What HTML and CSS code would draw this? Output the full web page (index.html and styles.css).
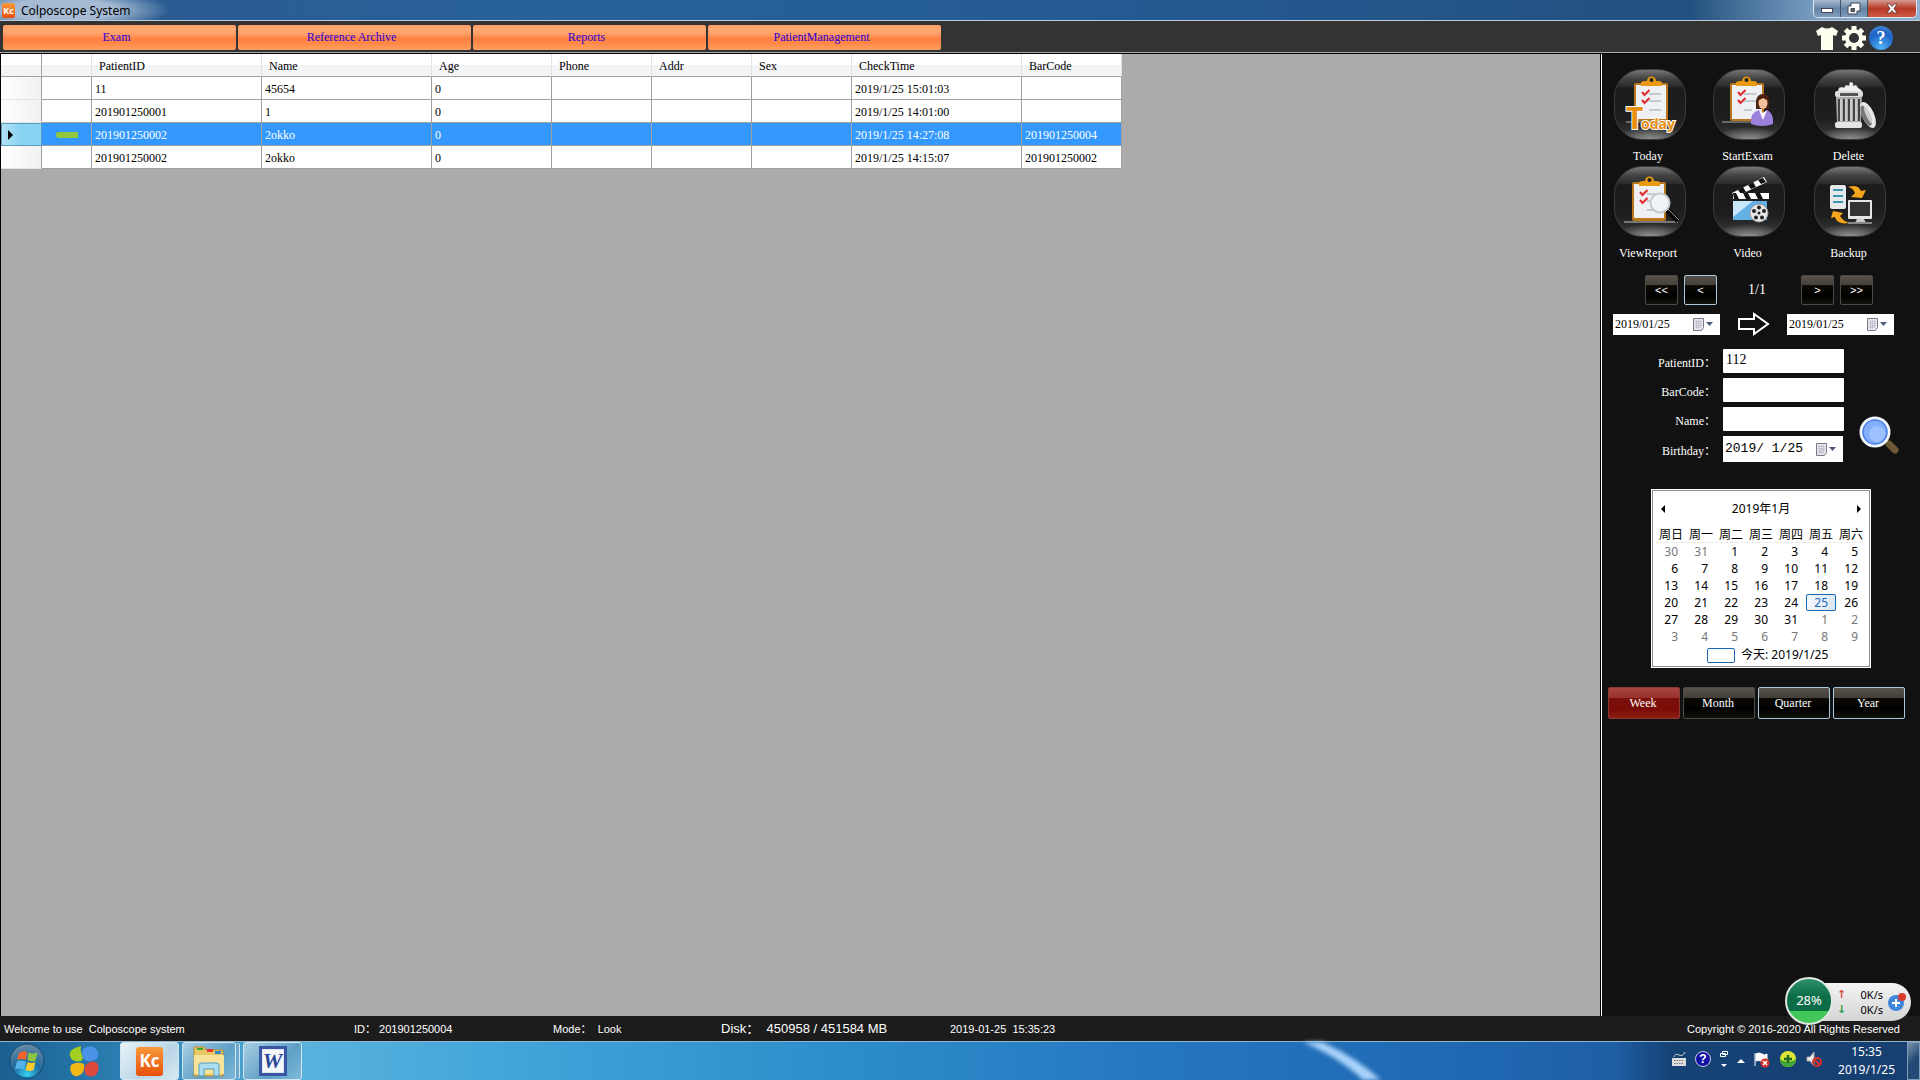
FILE: index.html
```html
<!DOCTYPE html>
<html lang="en">
<head>
<meta charset="utf-8">
<title>Colposcope System</title>
<link rel="stylesheet" href="styles.css">
</head>
<body>
<header class="titlebar">
  <span class="app-badge">Kc</span>
  <h1 class="app-title">Colposcope System</h1>
  <div class="window-controls">
    <button class="win-btn win-min" aria-label="Minimize"><svg width="14" height="14" viewBox="0 0 14 14"><rect x="1.500" y="6.500" width="11" height="4" fill="#fff" stroke="#445" /></svg></button>
    <button class="win-btn win-restore" aria-label="Restore"><svg width="14" height="14" viewBox="0 0 14 14"><path d="M4 1h9v8h-3v3H1V4h3z" fill="#fff" stroke="#445"/><path d="M4 6.500h3.500v3H4z" fill="#567" stroke="#445"/></svg></button>
    <button class="win-btn win-close" aria-label="Close"><svg width="14" height="14" viewBox="0 0 14 14"><path d="M2 2h3l2 2.500L9 2h3L9 6.500l3 4.500H9L7 8.500 5 11H2l3-4.500z" fill="#fff" stroke="#533" stroke-width=".8"/></svg></button>
  </div>
</header>

<div class="toolbar">
  <nav class="tabs">
    <button class="tab">Exam</button>
    <button class="tab">Reference Archive</button>
    <button class="tab">Reports</button>
    <button class="tab">PatientManagement</button>
  </nav>
  <div class="tools">
    <button class="tool" aria-label="Skin"><svg width="24" height="24" viewBox="0 0 24 24"><path d="M7 1Q12 4 17 1L23 5 21 10 18 9V24H6V9L3 10 1 5Z" fill="#fffff0"/></svg></button>
    <button class="tool" aria-label="Settings"><svg width="24" height="24" viewBox="0 0 24 24"><g fill="#fffff0"><rect x="9.500" width="5" height="24"/><rect x="9.500" width="5" height="24" transform="rotate(45 12 12)"/><rect x="9.500" width="5" height="24" transform="rotate(90 12 12)"/><rect x="9.500" width="5" height="24" transform="rotate(135 12 12)"/><circle cx="12" cy="12" r="9"/></g><circle cx="12" cy="12" r="5" fill="#333"/></svg></button>
    <button class="tool help-tool" aria-label="Help">?</button>
  </div>
</div>

<main class="workspace">
  <section class="records">
    <table class="grid">
      <colgroup><col class="c-head"><col class="c-mark"><col class="c-wide"><col class="c-wide"><col class="c-age"><col class="c-std"><col class="c-std"><col class="c-std"><col class="c-wide"><col class="c-std"></colgroup>
      <thead><tr><th></th><th></th><th>PatientID</th><th>Name</th><th>Age</th><th>Phone</th><th>Addr</th><th>Sex</th><th>CheckTime</th><th>BarCode</th></tr></thead>
      <tbody>
        <tr><th></th><td></td><td>11</td><td>45654</td><td>0</td><td></td><td></td><td></td><td>2019/1/25 15:01:03</td><td></td></tr>
        <tr><th></th><td></td><td>201901250001</td><td>1</td><td>0</td><td></td><td></td><td></td><td>2019/1/25 14:01:00</td><td></td></tr>
        <tr class="selected"><th><span class="row-arrow"></span></th><td><span class="mark"></span></td><td>201901250002</td><td>2okko</td><td>0</td><td></td><td></td><td></td><td>2019/1/25 14:27:08</td><td>201901250004</td></tr>
        <tr><th></th><td></td><td>201901250002</td><td>2okko</td><td>0</td><td></td><td></td><td></td><td>2019/1/25 14:15:07</td><td>201901250002</td></tr>
      </tbody>
    </table>
  </section>

  <aside class="panel">
    <div class="actions">
      <button class="action"><span class="tile">
        <svg width="72" height="71" viewBox="0 0 72 71">
          <rect x="12" y="52" width="46" height="2" fill="#666"/>
          <rect x="20" y="14" width="34" height="38" rx="2" fill="#b9771c"/><rect x="22" y="16" width="30" height="34" fill="#eef0f4"/>
          <path d="M27 17v-3q0-2 4-2h2a4.500 4.500 0 0 1 9 0h2q4 0 4 2v3z" fill="#e99a10"/><circle cx="37.500" cy="11" r="2" fill="#222"/>
          <path d="M35 25h12M35 32h12M35 41h12" stroke="#b9bcc2" stroke-width="1.500"/>
          <path d="M28 23l2.500 3 5-5M28 31l2.500 3 5-5" fill="none" stroke="#e12a2a" stroke-width="2"/>
          <text x="12" y="60" class="today-cap">T</text><text x="27" y="60" class="today-rest">oday</text>
        </svg></span><span class="action-name">Today</span></button>
      <button class="action"><span class="tile">
        <svg width="72" height="71" viewBox="0 0 72 71">
          <rect x="9" y="52" width="46" height="2" fill="#666"/>
          <rect x="17" y="14" width="34" height="38" rx="2" fill="#b9771c"/><rect x="19" y="16" width="30" height="34" fill="#eef0f4"/>
          <path d="M23 17v-3q0-2 4-2h2a4.500 4.500 0 0 1 9 0h2q4 0 4 2v3z" fill="#e99a10"/><circle cx="33.500" cy="11" r="2" fill="#222"/>
          <path d="M31 25h12M31 32h12M31 41h8" stroke="#b9bcc2" stroke-width="1.500"/>
          <path d="M25 23l2.500 3 5-5M25 31l2.500 3 5-5" fill="none" stroke="#e12a2a" stroke-width="2"/>
          <path d="M43 40V32q1-7 7-7t6 7v8z" fill="#4b2114"/>
          <ellipse cx="50" cy="34" rx="4.500" ry="6" fill="#f5c09a"/><path d="M44 31q2-6 6-5t6 5q-4 0-6-2-2 2-6 2z" fill="#4b2114"/>
          <path d="M38 55q-1-12 8-14l4 3 4-3q7 3 6 14-11 4-22 0z" fill="#9b80dc"/><path d="M46 41l4 10 4-10-4 3z" fill="#fff"/>
        </svg></span><span class="action-name">StartExam</span></button>
      <button class="action"><span class="tile">
        <svg width="72" height="71" viewBox="0 0 72 71">
          <path d="M24 22l1-3 3-1 2 1 2-3 3 1 1-4 3 1v3l3-1 2 3 3 2 1 2z" fill="#f2f2f2" stroke="#aaa" stroke-width=".5"/>
          <rect x="21" y="22" width="28" height="6" rx="2" fill="#ddd"/><path d="M26 24h18v3H26z" fill="#555"/><path d="M22 28h26l-1 26H23z" fill="#a9a9a9"/>
          <path d="M25 30v22M30 30v22M35 30v22M40 30v22M45 30v22" stroke="#444" stroke-width="2"/><path d="M27 30v22M32 30v22M37 30v22M42 30v22" stroke="#eee" stroke-width="1"/>
          <rect x="21" y="53" width="27" height="6" rx="2" fill="#e4e4e4"/>
          <g transform="rotate(-24 54 46)"><ellipse cx="54" cy="46" rx="6" ry="14" fill="#e8e8e8"/><ellipse cx="52" cy="46" rx="4" ry="11" fill="#777"/><ellipse cx="54" cy="46" rx="2" ry="9" fill="#ccc"/></g>
        </svg></span><span class="action-name">Delete</span></button>
      <button class="action"><span class="tile">
        <svg width="72" height="71" viewBox="0 0 72 71">
          <rect x="10" y="55" width="54" height="2" fill="#777"/>
          <rect x="18" y="16" width="34" height="39" rx="2" fill="#b9771c"/><rect x="20" y="18" width="30" height="34" fill="#eef0f4"/>
          <path d="M25 20v-3q0-2 4-2h2a4.500 4.500 0 0 1 9 0h2q4 0 4 2v3z" fill="#e99a10"/><circle cx="35.500" cy="14" r="2" fill="#222"/>
          <path d="M33 28h10M33 35h8M33 44h12" stroke="#b9bcc2" stroke-width="1.500"/>
          <path d="M26 26l2.500 3 5-5M26 34l2.500 3 5-5" fill="none" stroke="#e12a2a" stroke-width="2"/>
          <path d="M53 44l11 11" stroke="#050505" stroke-width="5"/><path d="M54 43l11 11" stroke="#999" stroke-width="1"/>
          <circle cx="46" cy="37" r="9.500" fill="#f0f4f6" stroke="#c6cacd" stroke-width="2"/>
        </svg></span><span class="action-name">ViewReport</span></button>
      <button class="action"><span class="tile">
        <svg width="72" height="71" viewBox="0 0 72 71">
          <path d="M19 27l32-16 3 5-32 15z" fill="#fff"/><path d="M25 24l3 4 5-2-3-5zM35 19l3 4 5-2-3-5zM45 14l3 4 5-2-3-4z" fill="#111"/>
          <rect x="20" y="27" width="36" height="6" fill="#fff"/><path d="M20 27h3l3 6h-5zM30 27h5l3 6h-5zM42 27h5l3 6h-5z" fill="#111"/>
          <rect x="20" y="35" width="34" height="19" fill="#63b0e4"/><path d="M20 35h20L20 51z" fill="#c8e8fa"/>
          <circle cx="46" cy="47" r="9" fill="#e8e8e8" stroke="#999"/><g fill="#222"><circle cx="46" cy="47" r="1.500"/><circle cx="46" cy="41.500" r="2"/><circle cx="51" cy="45" r="2"/><circle cx="49" cy="51.500" r="2"/><circle cx="43" cy="51.500" r="2"/><circle cx="41" cy="45" r="2"/></g>
        </svg></span><span class="action-name">Video</span></button>
      <button class="action"><span class="tile">
        <svg width="72" height="71" viewBox="0 0 72 71">
          <rect x="16" y="19" width="16" height="24" rx="2" fill="#e6e9ea"/><path d="M19 24h10M19 30h10M19 36h10" stroke="#3f95b5" stroke-width="2"/>
          <path d="M34 21q10-3 13 4l5-1-4 8-11-1 4-4q-2-5-7-6z" fill="#f5a51a"/><path d="M35 57q-12 2-14-6l-4 1 2-7 10 2-3 3q3 5 9 7z" fill="#f5a51a"/>
          <rect x="34" y="34" width="24" height="19" rx="1" fill="#e6e6e6"/><rect x="36" y="36" width="20" height="14" fill="#333"/><path d="M43 53h7l2 4H41z" fill="#ccc"/><rect x="34" y="56" width="24" height="2" fill="#888"/>
        </svg></span><span class="action-name">Backup</span></button>
    </div>

    <div class="pager">
      <button class="dark-btn page-btn">&lt;&lt;</button>
      <button class="dark-btn page-btn focus">&lt;</button>
      <span class="page-count">1/1</span>
      <button class="dark-btn page-btn">&gt;</button>
      <button class="dark-btn page-btn">&gt;&gt;</button>
    </div>

    <div class="range">
      <div class="picker"><input type="text" value="2019/01/25" aria-label="From date"><button class="drop" aria-label="Open calendar"><svg width="20" height="13" viewBox="0 0 20 13"><path d="M.5.5h10v9l-2 3h-8z" fill="#e8e8ee" stroke="#778"/><path d="M2 3.500h7M2 5.500h7M2 7.500h7M2 9.500h5M3.500 2v9M5.500 2v9M7.500 2v8" stroke="#aab" stroke-width=".5"/><path d="M13 4h7l-3.500 4z" fill="#4a5a80"/></svg></button></div>
      <svg class="range-arrow" width="33" height="24" viewBox="0 0 33 24"><path d="M2 7h15V2l14 10-14 10v-5H2z" fill="none" stroke="#fff" stroke-width="2"/></svg>
      <div class="picker"><input type="text" value="2019/01/25" aria-label="To date"><button class="drop" aria-label="Open calendar"><svg width="20" height="13" viewBox="0 0 20 13"><path d="M.5.5h10v9l-2 3h-8z" fill="#e8e8ee" stroke="#778"/><path d="M2 3.500h7M2 5.500h7M2 7.500h7M2 9.500h5M3.500 2v9M5.500 2v9M7.500 2v8" stroke="#aab" stroke-width=".5"/><path d="M13 4h7l-3.500 4z" fill="#4a5a80"/></svg></button></div>
    </div>

    <form class="search">
      <div class="fields">
        <label for="pid">PatientID：</label><input id="pid" class="field" type="text" value="112">
        <label for="bar">BarCode：</label><input id="bar" class="field" type="text">
        <label for="nam">Name：</label><input id="nam" class="field" type="text">
        <label for="bday">Birthday：</label>
        <div class="picker birthday"><input id="bday" type="text" value="2019/ 1/25"><button type="button" class="drop" aria-label="Open calendar"><svg width="20" height="13" viewBox="0 0 20 13"><path d="M.5.5h10v9l-2 3h-8z" fill="#e8e8ee" stroke="#778"/><path d="M2 3.500h7M2 5.500h7M2 7.500h7M2 9.500h5M3.500 2v9M5.500 2v9M7.500 2v8" stroke="#aab" stroke-width=".5"/><path d="M13 4h7l-3.500 4z" fill="#4a5a80"/></svg></button></div>
      </div>
      <button type="button" class="search-btn" aria-label="Search"><svg width="40" height="40" viewBox="0 0 40 40"><path d="M30 28l6 6" stroke="#6e5836" stroke-width="7" stroke-linecap="round"/><circle cx="16" cy="16" r="14" fill="#82aefb" stroke="#f4f7fb" stroke-width="3"/><circle cx="16" cy="16" r="12" fill="none" stroke="#4f82e6" stroke-width="1.500"/><circle cx="18" cy="18" r="8" fill="#9ec2ff"/></svg></button>
    </form>

    <section class="calendar">
      <div class="cal-head"><button aria-label="Previous month" class="cal-nav prev"></button><span>2019年1月</span><button aria-label="Next month" class="cal-nav next"></button></div>
      <table class="cal-grid">
        <thead><tr><th>周日</th><th>周一</th><th>周二</th><th>周三</th><th>周四</th><th>周五</th><th>周六</th></tr></thead>
        <tbody>
          <tr><td class="out">30</td><td class="out">31</td><td>1</td><td>2</td><td>3</td><td>4</td><td>5</td></tr>
          <tr><td>6</td><td>7</td><td>8</td><td>9</td><td>10</td><td>11</td><td>12</td></tr>
          <tr><td>13</td><td>14</td><td>15</td><td>16</td><td>17</td><td>18</td><td>19</td></tr>
          <tr><td>20</td><td>21</td><td>22</td><td>23</td><td>24</td><td class="current">25</td><td>26</td></tr>
          <tr><td>27</td><td>28</td><td>29</td><td>30</td><td>31</td><td class="out">1</td><td class="out">2</td></tr>
          <tr><td class="out">3</td><td class="out">4</td><td class="out">5</td><td class="out">6</td><td class="out">7</td><td class="out">8</td><td class="out">9</td></tr>
        </tbody>
      </table>
      <div class="cal-today"><span class="today-box"></span><span>今天: 2019/1/25</span></div>
    </section>

    <div class="periods">
      <button class="dark-btn period active">Week</button>
      <button class="dark-btn period">Month</button>
      <button class="dark-btn period focus">Quarter</button>
      <button class="dark-btn period focus">Year</button>
    </div>
  </aside>
</main>

<footer class="status">
  <span class="s-welcome">Welcome to use&nbsp; Colposcope system</span>
  <span class="s-id">ID：&nbsp;201901250004</span>
  <span class="s-mode">Mode：&nbsp; Look</span>
  <span class="s-disk">Disk：&nbsp; 450958 / 451584 MB</span>
  <span class="s-time">2019-01-25&nbsp; 15:35:23</span>
  <span class="s-copy">Copyright © 2016-2020 All Rights Reserved</span>
</footer>

<div class="taskbar">
  <svg class="streak" viewBox="0 0 1920 38" preserveAspectRatio="none" aria-hidden="true"><path d="M1298 -2h20q40 18 65 42h-18q-25-25-67-42z" fill="#a9d2fa"/></svg>
  <div class="launchers">
    <button class="launch start" aria-label="Start"><svg width="36" height="36" viewBox="0 0 36 36"><defs><radialGradient id="orb" cx=".5" cy=".9" r=".9"><stop offset="0" stop-color="#35d0f5"/><stop offset=".45" stop-color="#1c6ba0"/><stop offset="1" stop-color="#6c8ba5"/></radialGradient></defs><circle cx="18" cy="18" r="17" fill="url(#orb)" stroke="#17486c"/><path d="M10 10q4-3 8-1l-1 8q-4-2-9 0z" fill="#f0642c"/><path d="M19.500 9.500q4 2 9 0l-2 8q-4 2-8-.5z" fill="#8cc63e"/><path d="M8 18.500q4-2 9 0l-2 8q-4-2-9 0z" fill="#56b4ea"/><path d="M18.500 19q4 2 8 0l-2 8q-4 2-8 0z" fill="#fcc92e"/></svg></button>
    <button class="launch petals" aria-label="Browser"><svg width="30" height="32" viewBox="0 0 30 32"><path d="M12 1Q-1 4 1 11t11 5q3-2 1-6t-1-9z" fill="#a3cf22"/><path d="M14 4q7-5 12-1t2 11q-8 4-12 1T14 4z" fill="#4a93e8"/><path d="M2 20q6-4 13-1 1 8-4 11t-8-1-1-9z" fill="#f3b813"/><path d="M16 21q5-6 10-4t3 9-10 5q-5-2-3-10z" fill="#dd493c"/></svg></button>
    <button class="task open" aria-label="Colposcope System"><span class="app-badge big">Kc</span></button>
    <button class="task stacked" aria-label="Explorer"><svg width="34" height="32" viewBox="0 0 34 32"><path d="M2 5V2h10l2 3h17v26H2z" fill="#e8c765" stroke="#b48b35"/><path d="M5 3h6v2H5z" fill="#3a3"/><path d="M15 4h6v3h-6z" fill="#e33"/><path d="M23 6h6v3h-6z" fill="#38c"/><path d="M2 10h30v19H2z" fill="#f7e29a"/><path d="M7 31V20q0-2 3-2h14q3 0 3 2v11h-5v-7H12v7z" fill="#a9ddef" stroke="#4d9fc4"/></svg></button>
    <button class="task" aria-label="Word"><span class="word">W</span></button>
  </div>
  <div class="tray">
    <div class="tray-icons">
      <svg width="16" height="16" viewBox="0 0 16 16"><path d="M3 6q1-4 5-2t6-3" fill="none" stroke="#ccc"/><rect x="1" y="7" width="14" height="8" fill="#ddd"/><path d="M3 9.500h10M3 12.500h10" stroke="#777" stroke-dasharray="1.500 1"/></svg>
      <span class="tray-help">?</span>
      <svg width="10" height="18" viewBox="0 0 10 18"><path d="M3.500 1.500h5v3h-5zM1.500 3.500h5v3h-5z" fill="none" stroke="#fff"/><path d="M2 14h6l-3 3z" fill="#fff"/></svg>
      <svg width="8" height="16" viewBox="0 0 8 16"><path d="M0 12l4-4 4 4z" fill="#fff"/></svg>
      <svg width="18" height="18" viewBox="0 0 18 18"><path d="M2 3v13M3 4q3-2 6 0t5 0v7q-3 1-6 0t-5 0z" fill="#fff" stroke="#fff"/><circle cx="12" cy="13" r="4.500" fill="#d9302c"/><path d="M10 11l4 4M14 11l-4 4" stroke="#fff" stroke-width="1.500"/></svg>
      <svg width="18" height="18" viewBox="0 0 18 18"><circle cx="9" cy="9" r="8" fill="#dfe534"/><path d="M1 9a8 8 0 0 0 16 0q-8 6-16 0z" fill="#3da735"/><path d="M9 5v8M5 9h8" stroke="#1c6a20" stroke-width="2.500"/></svg>
      <svg width="18" height="18" viewBox="0 0 18 18"><path d="M2 7h3l4-5v14l-4-5H2z" fill="#eee" stroke="#aaa"/><circle cx="12" cy="12" r="4" fill="none" stroke="#d9302c" stroke-width="2"/><path d="M9 9l6 6" stroke="#d9302c" stroke-width="2"/></svg>
    </div>
    <div class="clock"><span>15:35</span><span>2019/1/25</span></div>
    <button class="show-desktop" aria-label="Show desktop"></button>
  </div>
</div>

<div class="meter">
  <span class="meter-ball">28%</span>
  <div class="meter-rates">
    <span class="rate"><i class="up">↑</i>0K/s</span>
    <span class="rate"><i class="down">↓</i>0K/s</span>
  </div>
  <button class="meter-add" aria-label="Speed up"><svg width="20" height="20" viewBox="0 0 20 20"><circle cx="9" cy="11" r="8" fill="#3f86dd"/><path d="M9 7v8M5 11h8" stroke="#fff" stroke-width="2"/><circle cx="15" cy="5" r="4" fill="#d83a30"/></svg></button>
</div>
</body>
</html>
```
FILE: styles.css
```css
* { box-sizing: border-box; }
body {
  margin: 0;
  min-height: 100vh;
  display: flex;
  flex-direction: column;
  position: relative;
  background: #000;
  font: 12px/16px "Liberation Serif", "Noto Sans CJK SC", serif;
}
button, input { font: inherit; padding: 0; margin: 0; border: 0; }
button { background: none; color: inherit; }
svg { display: block; }

/* title bar */
.titlebar {
  display: flex;
  align-items: center;
  height: 21px;
  padding: 1px 0 0 2px;
  border-bottom: 1px solid #b9cbdd;
  background:
    radial-gradient(ellipse 110px 22px at 60px 10px, #a5bbd3 0 50%, transparent 100%),
    linear-gradient(90deg, #2c5a8e 0, #27619c 30%, #245a92 60%, #23517f 88%, #7fa3c6 95%, #8fb0d0 100%);
}
.app-badge {
  width: 13px;
  height: 15px;
  border-radius: 2px;
  background: linear-gradient(#f79a3a, #e8500c);
  color: #fff;
  font: bold 9px/15px "Open Sans", sans-serif;
  text-align: center;
}
.app-title { margin: 0 0 0 6px; font: 12px/16px "Noto Sans", sans-serif; color: #000; }
.window-controls {
  display: flex;
  align-self: flex-start;
  margin: -1px 3px 0 auto;
  height: 18px;
  border: 1px solid #dfe8f0;
  border-top: 0;
  border-radius: 0 0 5px 5px;
  overflow: hidden;
}
.win-btn { display: flex; align-items: center; justify-content: center; width: 27px; background: linear-gradient(#a9bccf, #6685a6 50%, #7d9bb9); border-right: 1px solid #456; }
.win-close { width: 48px; border: 0; background: linear-gradient(#d79a90, #b73a26 50%, #cf5a44); }

/* toolbar */
.toolbar { display: flex; justify-content: space-between; height: 32px; padding: 4px 27px 2px 3px; background: #333; border-bottom: 1px solid #aaa; }
.tabs { display: flex; gap: 2px; }
.tab {
  width: 233px;
  height: 25px;
  padding: 0 6px 2px 0;
  border-radius: 2px;
  color: #2a00d8;
  background: linear-gradient(#ff9d66 0, #ffaa74 20%, #ff9a62 40%, #ff8040 55%, #ff8a48 75%, #ffa060 100%);
}
.tools { display: flex; align-items: center; gap: 3px; }
.tool { width: 24px; height: 24px; }
.help-tool {
  border-radius: 50%;
  background: radial-gradient(circle at 50% 90%, #4fb2f2, #1b62c4 60%, #5a90d8);
  color: #fff;
  font: bold 18px/24px "Liberation Serif", serif;
}

/* workspace */
.workspace { flex: 1; display: flex; border-top: 1px solid #000; border-left: 1px solid #000; }
.records { flex: 1; background: #ababab; }
.grid { border-spacing: 0; table-layout: fixed; width: 1121px; }
.c-head { width: 41px; } .c-mark { width: 50px; } .c-wide { width: 170px; } .c-age { width: 120px; } .c-std { width: 100px; }
.grid th, .grid td { height: 23px; padding: 1px 3px 0; text-align: left; font-weight: normal; border-right: 1px solid #a0a0a0; border-bottom: 1px solid #a0a0a0; }
.grid td { background: #fff; }
.grid thead th { padding: 1px 7px 0; border-right-color: #e0e2e6; background: linear-gradient(#fff 0 50%, #f3f4f6 51%, #f3f4f6); }
.grid thead th:first-child { border-right-color: #a0a0a0; }
.grid tbody th { background: linear-gradient(90deg, #fff, #f0f1f3); border-bottom-color: #e4e4e6; }
.grid .selected td { background: #3399ff; color: #fff; }
.grid .selected th { background: linear-gradient(90deg, #b5e0f4, #86d3f3 50%); border: 1px solid #5b9dbd; }
.row-arrow { display: block; width: 5px; border: 5px solid transparent; border-left-color: #000; border-right: 0; margin-left: 3px; }
.mark { display: block; width: 22px; height: 6px; margin: 0 auto; border-radius: 3px 0 0 3px; background: #92c83e; }

/* right panel */
.panel { flex: 0 0 320px; padding-top: 15px; background: #111; color: #fff; border-left: 1px solid #000; box-shadow: inset 1px 0 #fff; }
.actions { display: grid; grid-template-columns: 97px 102px 100px; }
.action { display: flex; flex-direction: column; align-items: center; height: 97px; }
.tile {
  width: 72px;
  height: 71px;
  border-radius: 28px;
  border: 1px solid #3c3c3c;
  background:
    radial-gradient(ellipse 36px 12px at 50% 100%, #909090, transparent),
    linear-gradient(#777 0, #444 12%, #2a2a2a 24%, #1b1b1b 26%, #1e1e1e 70%, #3c3c3c 100%);
}
.tile svg { margin: -1px; }
.action-name { margin-top: 8px; padding-right: 3px; }
.today-cap { font: bold 30px "Open Sans", sans-serif; fill: #e98f10; stroke: #fff; stroke-width: 2px; paint-order: stroke; }
.today-rest { font: bold 14px "Open Sans", sans-serif; fill: #e98f10; stroke: #fff; stroke-width: 2px; paint-order: stroke; }

.dark-btn {
  border: 1px solid #4c4a46;
  border-radius: 2px;
  background: linear-gradient(#57514a 0, #443f39 33%, #0c0a04 34%, #000 70%, #14110b 100%);
  color: #fff;
}
.dark-btn.focus { border-color: #a9c8dc; }
.pager { display: flex; align-items: center; gap: 6px; margin-top: 12px; padding-left: 44px; }
.page-btn { width: 33px; height: 30px; font: 11px/16px "Liberation Sans", sans-serif; }
.page-count { width: 72px; padding-right: 4px; text-align: center; font-size: 14px; }

.range { display: flex; align-items: center; gap: 17px; margin-top: 7px; padding-left: 12px; }
.picker { display: flex; align-items: center; width: 107px; height: 21px; padding: 0 7px 0 2px; background: #fff; }
.picker input { flex: 1; min-width: 0; background: transparent; color: #000; }

.search { display: flex; align-items: flex-end; gap: 15px; margin: 13px 0 0; }
.fields { display: grid; grid-template-columns: 115px 121px; column-gap: 7px; row-gap: 5px; align-items: center; }
.fields label { text-align: right; padding-top: 3px; }
.field { height: 24px; padding: 0 4px 2px 3px; background: #fff; color: #000; font-size: 14px; border-radius: 1px; }
.birthday { width: 120px; height: 26px; }
.birthday input { font: 13px/20px "Liberation Mono", monospace; }
.search-btn { margin-bottom: 6px; }

.calendar {
  width: 220px;
  margin: 27px 0 0 50px;
  padding: 0 3px 2px;
  border: 1px solid #fff;
  outline: 1px solid #8a8d94;
  outline-offset: -2px;
  background: #fff;
  color: #000;
  font: 12px/16px "Noto Sans", "Noto Sans CJK SC", sans-serif;
}
.cal-head { display: flex; align-items: center; justify-content: space-between; height: 37px; padding: 0 6px; }
.cal-nav { border: 4px solid transparent; }
.prev { border-right-color: #000; border-left: 0; }
.next { border-left-color: #000; border-right: 0; }
.cal-grid { margin: 0 auto; border-spacing: 0; table-layout: fixed; width: 210px; }
.cal-grid th { height: 16px; padding: 0; font-weight: normal; line-height: 14px; border-bottom: 1px solid #eee; white-space: nowrap; }
.cal-grid td { height: 17px; padding: 0 8px 0 0; text-align: right; line-height: 15px; border: 0; }
.cal-grid .out { color: #777; }
.cal-grid .current { color: #1a6ac0; border-radius: 2px; box-shadow: inset 0 0 0 1px #1668b8; background: linear-gradient(90deg, #f2f7fc, #dde7f2); }
.cal-today { display: flex; align-items: center; gap: 6px; height: 20px; padding-left: 52px; }
.today-box { width: 28px; height: 15px; border: 1px solid #1668b8; border-radius: 2px; }

.periods { display: flex; gap: 3px; margin-top: 19px; padding-left: 7px; }
.period { width: 72px; height: 32px; padding-right: 2px; }
.period.active { border-color: #8a3a34; background: linear-gradient(#a84640 0, #98302c 33%, #7c0f0a 34%, #7a0c06 70%, #8e1c10 100%); }

/* status strip */
.status {
  display: grid;
  grid-template-columns: 350px 199px 168px 229px 1fr auto;
  align-items: center;
  height: 25px;
  padding: 0 20px 0 4px;
  background: #1c1c1c;
  color: #fff;
  font: 11px/16px "Liberation Sans", "Noto Sans CJK SC", sans-serif;
}
.s-disk { font-size: 13px; }

/* taskbar */
.taskbar {
  position: relative;
  display: flex;
  justify-content: space-between;
  height: 39px;
  border-top: 1px solid #8fb4cc;
  background: linear-gradient(90deg, #1a5f92 0, #2a7db0 6%, #58b2de 16%, #3fa3d8 28%, #2e90cc 42%, #2577c0 60%, #1f66b0 78%, #1e5fa5 84%, #164276 87%, #173f70 100%);
}
.streak { position: absolute; inset: 0; width: 100%; height: 100%; filter: blur(2px); }
.launchers { position: relative; display: flex; align-items: center; padding-left: 9px; }
.petals { margin: 0 21px 0 24px; }
.task {
  display: flex;
  align-items: center;
  justify-content: center;
  width: 59px;
  height: 38px;
  margin-right: 3px;
  border: 1px solid #d0e6f2;
  border-radius: 3px;
  background: linear-gradient(135deg, #a8cfe4, #5d9fc6 60%, #7fb9d8);
}
.task.open { background: linear-gradient(135deg, #e8f2f8, #b9d5e6 60%, #d8e9f2); }
.task.stacked { width: 54px; margin-right: 7px; box-shadow: 4px 0 0 -1px #6ba8cb, 5px 0 0 -1px #cfe5f1; }
.app-badge.big { width: 27px; height: 29px; border-radius: 3px; font-size: 17px; line-height: 28px; }
.word { width: 28px; height: 30px; border: 3px solid #3a55a4; outline: 1px solid #dfe6f4; outline-offset: -4px; background: #f4f6fb; color: #2a4796; font: italic bold 22px/24px "Liberation Serif", serif; text-align: center; }
.tray { position: relative; display: flex; align-items: center; }
.tray-icons { display: flex; align-items: center; gap: 8px; padding-bottom: 4px; }
.tray-help { width: 16px; height: 16px; border: 1px solid #ccd; border-radius: 50%; background: #1111a8; color: #fff; font: bold 12px/14px "Liberation Sans", sans-serif; text-align: center; }
.clock { display: flex; flex-direction: column; align-items: center; margin: 0 12px 0 15px; color: #fff; font: 12px/18px "Noto Sans", sans-serif; }
.show-desktop { width: 13px; height: 38px; border: 1px solid #7f9cba; background: linear-gradient(135deg, #7c93ac, #234a75 50%); }

/* floating network meter */
.meter {
  position: absolute;
  right: 9px;
  bottom: 59px;
  display: flex;
  align-items: center;
  width: 114px;
  height: 38px;
  border-radius: 0 19px 19px 0;
  background: linear-gradient(#f4f4f4, #d4d4d4);
  font: 11px/15px "Noto Sans", sans-serif;
}
.meter-ball {
  flex: none;
  width: 48px;
  height: 48px;
  margin: 0 0 2px -12px;
  border: 2px solid #dfe8e2;
  border-radius: 50%;
  background: linear-gradient(#2c9068 0, #0c6e48 40%, #0c6e48 72%, #42c858 73%);
  color: #fff;
  font: 13px/42px "Noto Sans", sans-serif;
  text-align: center;
}
.meter-rates { display: flex; flex-direction: column; width: 50px; padding-left: 4px; }
.rate { display: flex; justify-content: space-between; }
.rate i { font: bold 11px/15px "DejaVu Sans", sans-serif; }
.up { color: #d8483e; }
.down { color: #2c9a50; }
.meter-add { margin-left: 4px; }
```
